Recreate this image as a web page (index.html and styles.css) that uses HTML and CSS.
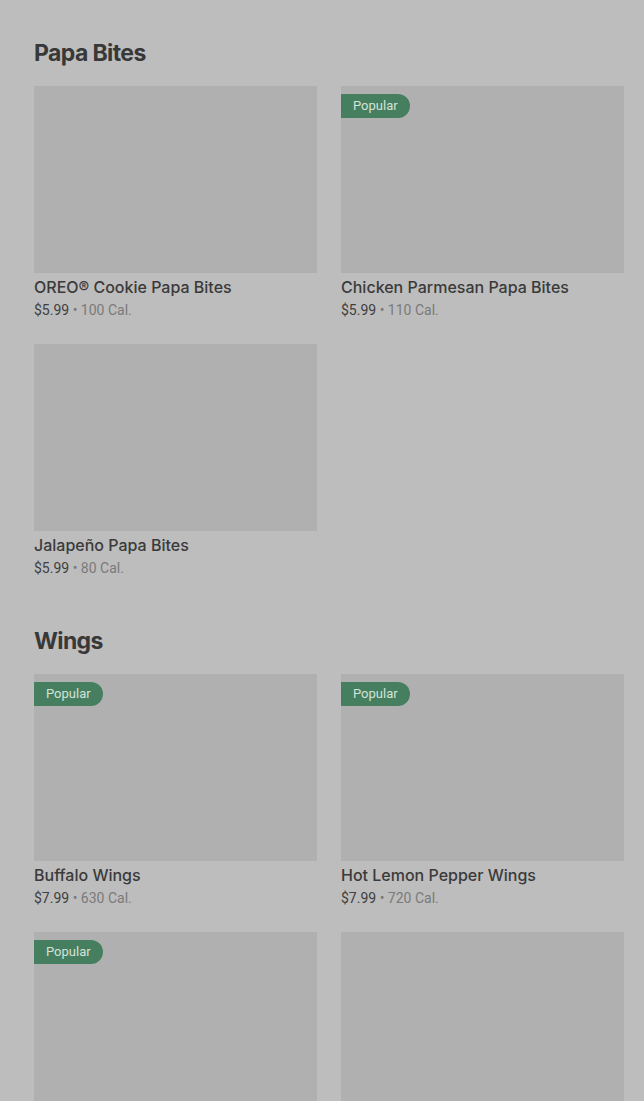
FILE: index.html
```html
<!DOCTYPE html>
<html lang="en">
<head>
    <meta charset="UTF-8">
    <meta name="viewport" content="width=device-width, initial-scale=1.0">
    <title>Menu</title>
    <link rel="stylesheet" href="styles.css">
</head>
<body>
    <div class="menu">
        <!-- Papa Bites -->
        <section class="category">
            <h2>Papa Bites</h2>
            <div class="grid">
                <div class="item">
                    <div class="thumb"></div>
                    <div class="name">OREO® Cookie Papa Bites</div>
                    <div class="meta"><span class="price">$5.99</span> • 100 Cal.</div>
                </div>
                <div class="item">
                    <div class="thumb"><span class="badge">Popular</span></div>
                    <div class="name">Chicken Parmesan Papa Bites</div>
                    <div class="meta"><span class="price">$5.99</span> • 110 Cal.</div>
                </div>
                <div class="item">
                    <div class="thumb"></div>
                    <div class="name">Jalapeño Papa Bites</div>
                    <div class="meta"><span class="price">$5.99</span> • 80 Cal.</div>
                </div>
            </div>
        </section>

        <!-- Wings -->
        <section class="category">
            <h2>Wings</h2>
            <div class="grid">
                <div class="item">
                    <div class="thumb"><span class="badge">Popular</span></div>
                    <div class="name">Buffalo Wings</div>
                    <div class="meta"><span class="price">$7.99</span> • 630 Cal.</div>
                </div>
                <div class="item">
                    <div class="thumb"><span class="badge">Popular</span></div>
                    <div class="name">Hot Lemon Pepper Wings</div>
                    <div class="meta"><span class="price">$7.99</span> • 720 Cal.</div>
                </div>
                <div class="item">
                    <div class="thumb"><span class="badge">Popular</span></div>
                </div>
                <div class="item">
                    <div class="thumb"></div>
                </div>
            </div>
        </section>
    </div>
</body>
</html>
```

FILE: styles.css
```css
body {
    margin: 0;
    padding: 0;
    background-color: #bdbdbd;
    font-family: Inter, Roboto, "Liberation Sans", sans-serif;
    color: #333333;
}

.menu {
    padding: 37px 20px 0 34px;
}

.category + .category {
    margin-top: 47px;
}

h2 {
    margin: 0 0 17px;
    font-size: 23px;
    line-height: 32px;
    font-weight: 700;
    letter-spacing: -0.6px;
    color: #383838;
}

.grid {
    display: grid;
    grid-template-columns: 1fr 1fr;
    gap: 24px;
}

.thumb {
    position: relative;
    height: 187px;
    background-color: #b0b0b0;
}

.badge {
    position: absolute;
    top: 8px;
    left: 0;
    height: 24px;
    padding: 0 12px;
    border-radius: 0 12px 12px 0;
    background-color: #467f5f;
    color: #d4e2da;
    font-family: Roboto, "Liberation Sans", sans-serif;
    font-size: 13px;
    line-height: 24px;
}

.name {
    margin-top: 3px;
    font-size: 16px;
    line-height: 22px;
    font-weight: 500;
    color: #3a3a3a;
}

.meta {
    margin-top: 2px;
    font-family: Roboto, "Liberation Sans", sans-serif;
    font-size: 14px;
    line-height: 20px;
    color: #7a7a7a;
}

.price {
    color: #404040;
}
```
